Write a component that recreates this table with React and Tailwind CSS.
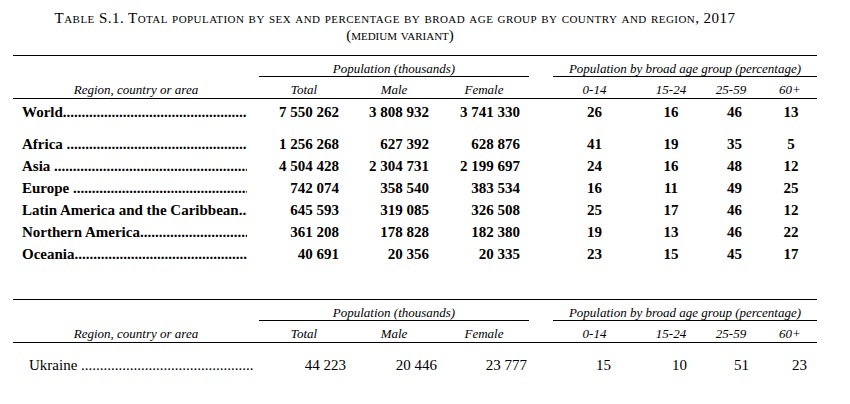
const serif = { fontFamily: '"Liberation Serif", "Times New Roman", serif' };

const regions = [
  { name: 'Africa ', total: '1 256 268', male: '627 392', female: '628 876', ages: ['41', '19', '35', '5'] },
  { name: 'Asia ', total: '4 504 428', male: '2 304 731', female: '2 199 697', ages: ['24', '16', '48', '12'] },
  { name: 'Europe ', total: '742 074', male: '358 540', female: '383 534', ages: ['16', '11', '49', '25'] },
  { name: 'Latin America and the Caribbean..', total: '645 593', male: '319 085', female: '326 508', ages: ['25', '17', '46', '12'] },
  { name: 'Northern America', total: '361 208', male: '178 828', female: '182 380', ages: ['19', '13', '46', '22'] },
  { name: 'Oceania', total: '40 691', male: '20 356', female: '20 335', ages: ['23', '15', '45', '17'] },
];

const dots = '.'.repeat(120);

// header block shared by both tables
const TableHeader = () => (
  <div className="text-[13px] italic leading-[14px]">
    <div className="h-px w-[804px] bg-black" />
    <div className="flex pt-[6px]">
      <div className="w-[246px]" />
      <div className="w-[270px] border-b border-black text-center">Population (thousands)</div>
      <div className="w-[24px]" />
      <div className="w-[264px] border-b border-black text-center">Population by broad age group (percentage)</div>
    </div>
    <div className="flex border-b border-black pt-[6px] pb-[1px]">
      <div className="w-[246px] text-center">Region, country or area</div>
      <div className="w-[90px] text-center">Total</div>
      <div className="w-[90px] text-center">Male</div>
      <div className="w-[90px] text-center">Female</div>
      <div className="w-[24px]" />
      <div className="w-[83px] text-center">0-14</div>
      <div className="w-[70px] text-center">15-24</div>
      <div className="w-[57px] pr-[7px] text-center">25-59</div>
      <div className="w-[54px] text-center">60+</div>
    </div>
  </div>
);

const BoldRow = ({ r, className = '' }) => (
  <div className={`flex text-[15px] font-bold leading-[22px] ${className}`}>
    <div className="flex w-[246px] pl-[9px] pr-[12px]">
      <span className="whitespace-pre">{r.name}</span>
      <span className="flex-1 overflow-hidden whitespace-nowrap">{dots}</span>
    </div>
    <div className="w-[90px] pr-[10px] text-right">{r.total}</div>
    <div className="w-[90px] pr-[10px] text-right">{r.male}</div>
    <div className="w-[90px] pr-[9px] text-right">{r.female}</div>
    <div className="w-[24px]" />
    <div className="w-[83px] text-center">{r.ages[0]}</div>
    <div className="w-[70px] text-center">{r.ages[1]}</div>
    <div className="w-[57px] text-center">{r.ages[2]}</div>
    <div className="w-[54px] pl-[2px] text-center">{r.ages[3]}</div>
  </div>
);

export default function App() {
  return (
    <div className="h-[404px] w-[850px] overflow-hidden bg-white text-black" style={serif}>
      <div className="pt-[10px] pr-[60px] text-center text-[15px] leading-[17px] [font-variant-caps:small-caps]">
        <div className="tracking-[0.45px]">Table S.1. Total population by sex and percentage by broad age group by country and region, 2017</div>
        <div className="pl-[10px]">(medium variant)</div>
      </div>

      <div className="ml-[13px] mt-[11px] w-[804px]">
        <TableHeader />
        <div className="pt-[2px]">
          <BoldRow r={{ name: 'World', total: '7 550 262', male: '3 808 932', female: '3 741 330', ages: ['26', '16', '46', '13'] }} />
          <div className="mt-[10px]">
            {regions.map((r) => (
              <BoldRow key={r.name} r={r} />
            ))}
          </div>
        </div>
      </div>

      <div className="ml-[13px] mt-[34px] w-[804px]">
        <TableHeader />
        <div className="mt-[11px] flex text-[15px] leading-[22px]">
          <div className="flex w-[246px] pl-[16px] pr-[6px]">
            <span className="whitespace-pre">Ukraine </span>
            <span className="flex-1 overflow-hidden whitespace-nowrap">{dots}</span>
          </div>
          <div className="w-[90px] pr-[3px] text-right">44 223</div>
          <div className="w-[90px] pr-[2px] text-right">20 446</div>
          <div className="w-[90px] pr-[2px] text-right">23 777</div>
          <div className="w-[24px]" />
          <div className="w-[83px] pr-[25px] text-right">15</div>
          <div className="w-[70px] pr-[19px] text-right">10</div>
          <div className="w-[57px] pr-[14px] text-right">51</div>
          <div className="w-[54px] pr-[10px] text-right">23</div>
        </div>
      </div>
    </div>
  );
}
